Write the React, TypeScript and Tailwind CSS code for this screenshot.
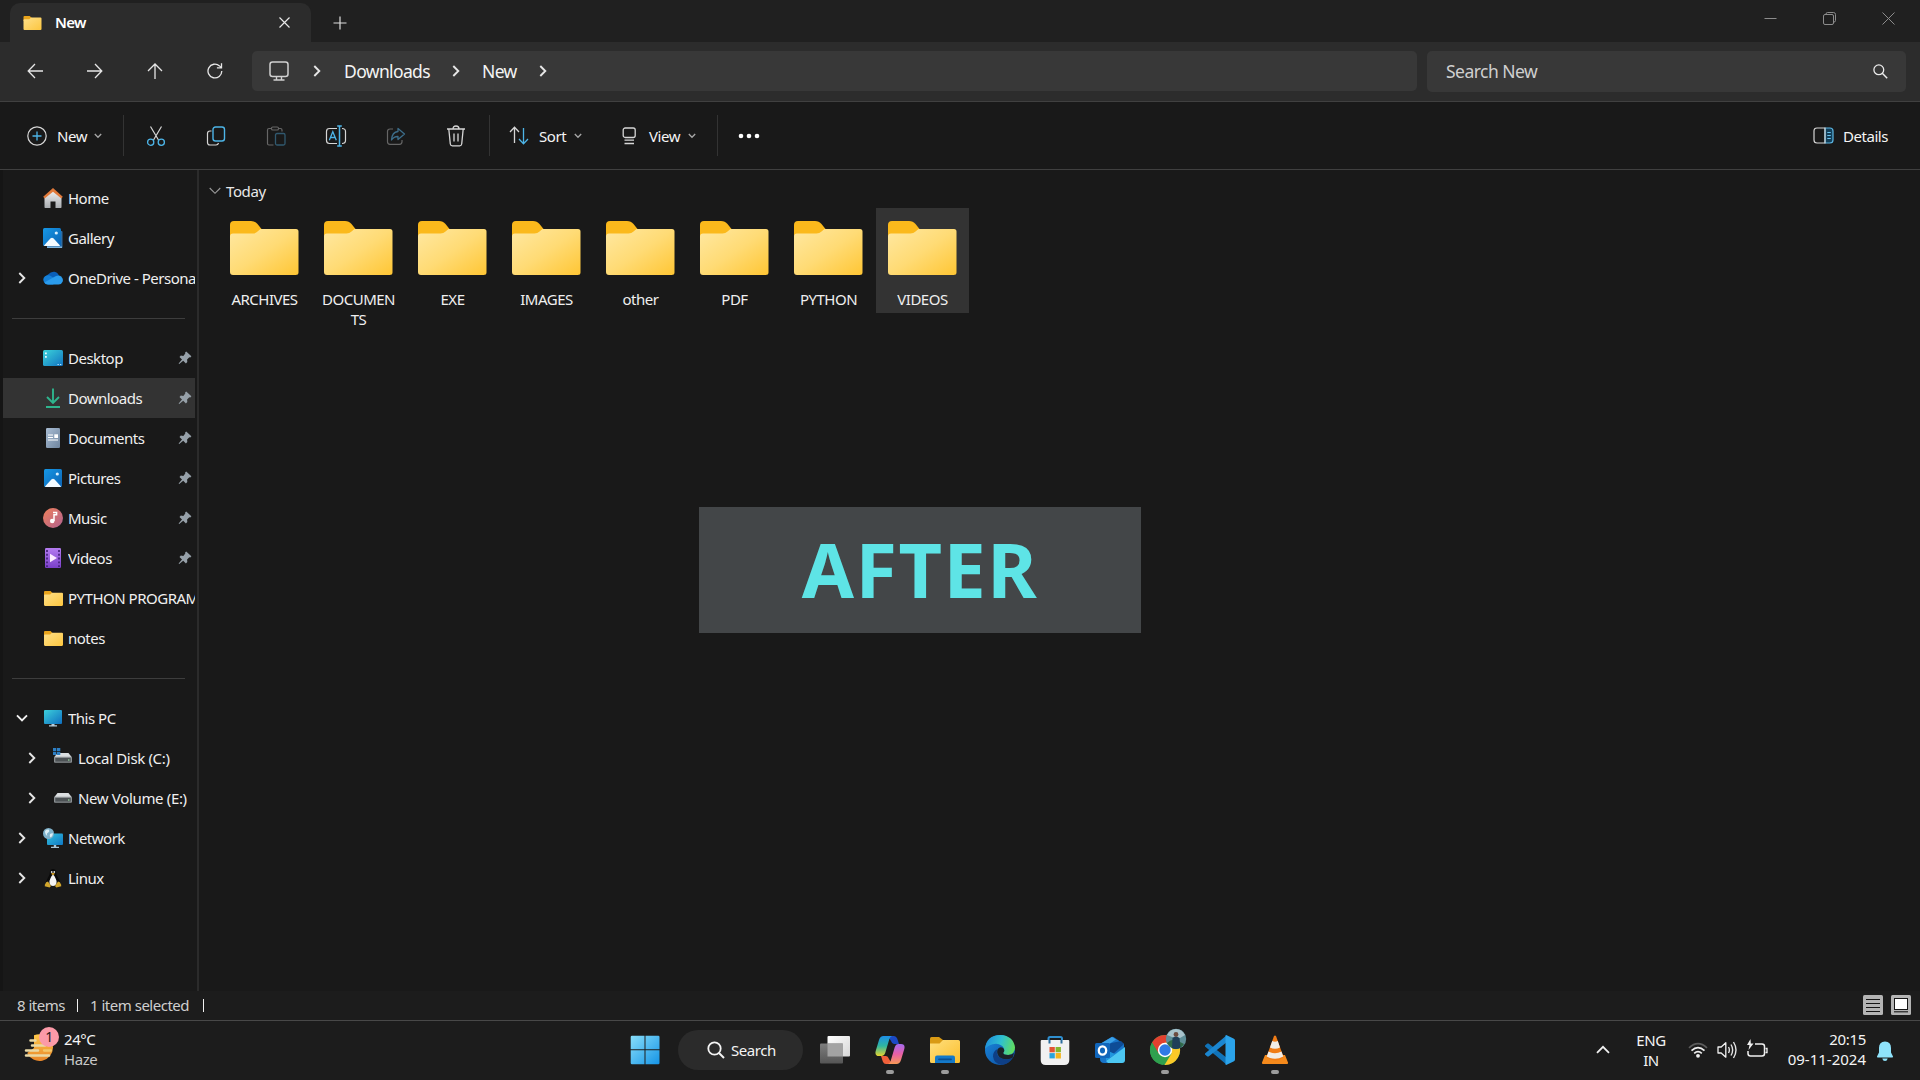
import type { ReactNode } from "react";

function Svg({ w, h, vb, className = "", children }: { w: number; h: number; vb?: string; className?: string; children: ReactNode }) {
  return (
    <svg width={w} height={h} viewBox={vb ?? `0 0 ${w} ${h}`} fill="none" className={`block shrink-0 ${className}`}>
      {children}
    </svg>
  );
}

/* ---------- small glyphs ---------- */

const ChevronRight = ({ className = "" }: { className?: string }) => (
  <Svg w={8} h={12} className={className}>
    <path d="M1.3 1 6.3 6l-5 5" stroke="#e6e6e6" strokeWidth="1.9" />
  </Svg>
);

const ChevronDownBold = () => (
  <Svg w={12} h={8}>
    <path d="M1 1.3 6 6.3l5-5" stroke="#f2f2f2" strokeWidth="1.9" />
  </Svg>
);

const ChevronSmall = ({ className = "" }: { className?: string }) => (
  <Svg w={8} h={6} className={className}>
    <path d="M.8 1 4 4.3 7.2 1" stroke="#a8a8a8" strokeWidth="1.3" />
  </Svg>
);

const Pin = () => (
  <Svg w={14} h={14}>
    <path d="M8.2.5 13.4 5.3 12.3 6.5l-1-.2-2.2 2.3.2 2.4-1.4 1.4-2.7-2.6L1.2 13 .6 12.5l3.400-4L1.500 5.900l1.300-1.300 2.500.3 2-2.300-.2-1Z" fill="#96a0a8" />
  </Svg>
);

/* ---------- folder ---------- */

const Folder = ({ w, h }: { w: number; h: number }) => (
  <Svg w={w} h={h} vb="0 0 69 54">
    <defs>
      <linearGradient id="folderFront" x1="0" y1="0" x2="1" y2="1">
        <stop offset="0" stopColor="#ffe8a1" />
        <stop offset=".5" stopColor="#ffdb75" />
        <stop offset="1" stopColor="#ffc634" />
      </linearGradient>
    </defs>
    <path d="M0 4q0-4 4-4h17q4 0 6.500 3l4 5v12H0Z" fill="#fbb91c" />
    <path d="M0 15.500q0-3 3-3h19.500q3 0 5-2L30.500 8H66q2.500 0 2.500 2.500v41Q68.500 54 65.500 54H3q-3 0-3-3Z" fill="url(#folderFront)" />
  </Svg>
);

const SmallFolder = ({ w = 19, h = 15 }: { w?: number; h?: number }) => (
  <Svg w={w} h={h} vb="0 0 18 14">
    <defs>
      <linearGradient id="sfFront" x1="0" y1="0" x2="1" y2="1">
        <stop offset="0" stopColor="#ffe08a" />
        <stop offset="1" stopColor="#fcc63f" />
      </linearGradient>
    </defs>
    <path d="M0 1q0-1 1-1h5.200L8 1.800V5H0Z" fill="#e9a41c" />
    <path d="M0 4q0-.7.8-.7h5L7.600 1.500H17q1 0 1 1V13q0 1-1 1H1q-1 0-1-1Z" fill="url(#sfFront)" />
  </Svg>
);

/* ---------- sidebar icons ---------- */

const HomeIcon = () => (
  <Svg w={20} h={20}>
    <defs>
      <linearGradient id="homeWall" x1="0" y1="0" x2="0" y2="1">
        <stop offset="0" stopColor="#f2f2f2" />
        <stop offset="1" stopColor="#a9adb1" />
      </linearGradient>
    </defs>
    <path d="M1.500 9 10 2l8.500 7v10.300q0 .7-.7.7H12.500v-6.500h-5V20H2.200q-.7 0-.7-.7Z" fill="url(#homeWall)" />
    <path d="M10 0 .2 8.700l1.400 1.900L10 3.700l8.400 6.900 1.400-1.900Z" fill="#e0793a" />
  </Svg>
);

const Photo = ({ gallery = false }: { gallery?: boolean }) => (
  <Svg w={20} h={20}>
    <defs>
      <linearGradient id="photoSky" x1="0" y1="0" x2="1" y2="1">
        <stop offset="0" stopColor="#1698e6" />
        <stop offset="1" stopColor="#0c63b4" />
      </linearGradient>
    </defs>
    {gallery && <path d="M4 3h14.500q1 0 1 1v15q0 1-1 1H5q-1 0-1-1Z" fill="#2c6da6" />}
    {gallery && <path d="M4 18.500h15V20H4Z" fill="#7fb4dc" />}
    <g transform={gallery ? "translate(0 0)" : "translate(1 1)"}>
      <rect width="18" height="18" rx="1.500" fill="url(#photoSky)" />
      <path d="m1 17.500 6.600-7.200q1.400-1.300 2.800 0L17 17.500q-.5.500-1 .5H2q-.6 0-1-.5Z" fill="#f3faff" />
      <circle cx="13.300" cy="5" r="1.600" fill="#d9f0ff" />
    </g>
  </Svg>
);

const OneDrive = () => (
  <Svg w={20} h={14}>
    <path d="M5 3.500Q8 .2 11.500.7q3.200.5 4.500 4l-6 4.800L1.500 9Q2 5 5 3.500Z" fill="#0a5fb8" />
    <path d="M1 11Q-.8 7.500 2 5.300q3.500-2.200 6.500.2L15 9.500 10 13.500H5Q2 13.500 1 11Z" fill="#1580d8" />
    <path d="M12.500 5.200q3.500-1.500 5.600.2 2.600 2.400 1.500 5.400-1 2.700-4 2.700H5q-2.500 0-3.700-1.900Z" fill="#2b9cec" />
  </Svg>
);

const DesktopIcon = () => (
  <Svg w={20} h={16}>
    <defs>
      <linearGradient id="desk" x1="0" y1="0" x2="1" y2="1">
        <stop offset="0" stopColor="#3cd3da" />
        <stop offset="1" stopColor="#1173c0" />
      </linearGradient>
    </defs>
    <rect width="20" height="16" rx="1.500" fill="url(#desk)" />
    <path d="M2 2.500h1.800v1.800H2zM2 6h1.800v1.800H2z" fill="#e6fbff" />
    <path d="M14.500 14h1.300v1h-1.300zM17 14h1.300v1H17z" fill="#bfe6ff" />
  </Svg>
);

const DownloadIcon = () => (
  <Svg w={20} h={20}>
    <path d="M10 .5v14M4 9l6 6 6-6M3 19h14" stroke="#2fb48d" strokeWidth="1.900" />
  </Svg>
);

const DocumentIcon = () => (
  <Svg w={20} h={20}>
    <defs>
      <linearGradient id="docBg" x1="0" y1="0" x2="1" y2="1">
        <stop offset="0" stopColor="#a9bdd4" />
        <stop offset="1" stopColor="#6f859e" />
      </linearGradient>
    </defs>
    <rect x="3" width="14" height="20" rx="1.200" fill="url(#docBg)" />
    <path d="M5 7h5M5 9.500h5M5 12h10" stroke="#fff" strokeWidth="1.200" />
    <rect x="11.300" y="6.300" width="3.700" height="3.700" fill="#fff" />
  </Svg>
);

const MusicIcon = () => (
  <Svg w={20} h={20}>
    <defs>
      <linearGradient id="mus" x1="0" y1="0" x2="1" y2="1">
        <stop offset="0" stopColor="#f0805a" />
        <stop offset="1" stopColor="#b0618f" />
      </linearGradient>
    </defs>
    <circle cx="10" cy="10" r="10" fill="url(#mus)" />
    <path d="M10 4.500h3.600v2.300H11V13" stroke="#fff" strokeWidth="1.500" />
    <circle cx="9.200" cy="13" r="2.300" fill="#fff" />
  </Svg>
);

const VideoIcon = () => (
  <Svg w={20} h={20}>
    <defs>
      <linearGradient id="vid" x1="0" y1="0" x2="0" y2="1">
        <stop offset="0" stopColor="#b47cf0" />
        <stop offset="1" stopColor="#7a3fc9" />
      </linearGradient>
    </defs>
    <rect x="2" width="16" height="20" rx="1.200" fill="url(#vid)" />
    <path d="M4 2v17M16 2v17" stroke="#43217a" strokeWidth="1.700" strokeDasharray="1.900 1.900" />
    <path d="m7 5.700 7 4.300-7 4.300Z" fill="#fbeaff" />
  </Svg>
);

const PcIcon = () => (
  <Svg w={20} h={18}>
    <defs>
      <linearGradient id="pcScreen" x1="0" y1="0" x2="1" y2="1">
        <stop offset="0" stopColor="#3ccfdb" />
        <stop offset="1" stopColor="#0f6fc0" />
      </linearGradient>
    </defs>
    <rect x="1" y="1" width="18" height="14" rx="1" fill="url(#pcScreen)" />
    <path d="M8.500 15h3v1.300H14v1.200H6v-1.200h2.500Z" fill="#b9cbd8" />
  </Svg>
);

const DriveIcon = ({ windows = false }: { windows?: boolean }) => (
  <Svg w={20} h={20}>
    <path d="M4.500 5h11L19 9.500H1Z" fill="#dcdfe1" />
    <rect x="1" y="8.800" width="18" height="6" rx="1" fill="#8b9093" />
    <rect x="2.300" y="10" width="15.400" height="3.600" fill="#4d5255" />
    <circle cx="15.800" cy="12" r=".8" fill="#9fe0a0" />
    {windows && <path d="M0-.2h3.300V3H0zM4-.2h3.300V3H4zM0 3.700h3.300v3.200H0zM4 3.700h3.300v3.200H4z" fill="#2d7fc4" />}
  </Svg>
);

const NetworkIcon = () => (
  <Svg w={20} h={20}>
    <defs>
      <linearGradient id="netScreen" x1="0" y1="0" x2="1" y2="1">
        <stop offset="0" stopColor="#35c3dd" />
        <stop offset="1" stopColor="#0f78c6" />
      </linearGradient>
    </defs>
    <rect x="4" y="5.500" width="16" height="11.500" rx="1" fill="url(#netScreen)" />
    <path d="M10.800 17h2.400v1.800H16V20H8v-1.200h2.800Z" fill="#a9c6d8" />
    <circle cx="5.500" cy="5.500" r="5.500" fill="#7fb2cb" />
    <path d="M2 3q2-2 4-1.300 1 2-1 3T4.500 8Q2 7 2 3ZM7 6q2-1 3-.5Q9.500 9 7.500 9.600 6.200 8 7 6Z" fill="#dceff6" />
  </Svg>
);

const LinuxIcon = () => (
  <Svg w={20} h={20}>
    <path d="M10 1q3.200 0 3.200 3.800 0 2.200 1.800 4.700 2 3 1.500 6L14 18H6l-2.500-2.500q-.5-3 1.500-6 1.800-2.500 1.800-4.700Q6.800 1 10 1Z" fill="#0a0a0a" />
    <path d="M10 6.500q1.800 1.300 2.600 4 1.500 2.600.9 5Q12.500 18 10 18t-3.500-2.500q-.6-2.400.9-5 .8-2.700 2.600-4Z" fill="#f4f4f4" />
    <circle cx="8.700" cy="4" r=".9" fill="#ddd" />
    <circle cx="11.300" cy="4" r=".9" fill="#ddd" />
    <path d="M8 5.700 10 4.800l2 .9-2 1.500Z" fill="#e0a825" />
    <path d="M3.200 14.200 5 13.500l3 4.500-1.300 1.600-5-1.300.4-2Z" fill="#d2a62c" />
    <path d="M16.800 14.200 15 13.500 12 18l1.300 1.600 5-1.300-.4-2Z" fill="#d2a62c" />
  </Svg>
);

/* ---------- sidebar ---------- */

type NavItem = { label: string; icon: ReactNode; pin?: boolean; active?: boolean; arrow?: "right" | "down"; nested?: boolean };

const groups: NavItem[][] = [
  [
    { label: "Home", icon: <HomeIcon /> },
    { label: "Gallery", icon: <Photo gallery /> },
    { label: "OneDrive - Persona", icon: <OneDrive />, arrow: "right" },
  ],
  [
    { label: "Desktop", icon: <DesktopIcon />, pin: true },
    { label: "Downloads", icon: <DownloadIcon />, pin: true, active: true },
    { label: "Documents", icon: <DocumentIcon />, pin: true },
    { label: "Pictures", icon: <Photo />, pin: true },
    { label: "Music", icon: <MusicIcon />, pin: true },
    { label: "Videos", icon: <VideoIcon />, pin: true },
    { label: "PYTHON PROGRAM", icon: <SmallFolder /> },
    { label: "notes", icon: <SmallFolder /> },
  ],
  [
    { label: "This PC", icon: <PcIcon />, arrow: "down" },
    { label: "Local Disk (C:)", icon: <DriveIcon windows />, arrow: "right", nested: true },
    { label: "New Volume (E:)", icon: <DriveIcon />, arrow: "right", nested: true },
    { label: "Network", icon: <NetworkIcon />, arrow: "right" },
    { label: "Linux", icon: <LinuxIcon />, arrow: "right" },
  ],
];

function SidebarRow({ item }: { item: NavItem }) {
  return (
    <div className={`flex h-10 items-center overflow-hidden ${item.active ? "bg-[#333333]" : ""} ${item.nested ? "pl-[22px]" : "pl-3"}`}>
      <div className="flex w-[14px] shrink-0 justify-center">
        {item.arrow === "right" && <ChevronRight />}
        {item.arrow === "down" && <ChevronDownBold />}
      </div>
      <div className="ml-[14px] flex w-5 shrink-0 justify-center">{item.icon}</div>
      <span className={`ml-[5px] min-w-0 grow overflow-hidden whitespace-nowrap text-[15px] leading-10 text-[#f0f0f0] ${item.nested ? "tracking-[-0.023em]" : "tracking-[-0.033em]"}`}>{item.label}</span>
      {item.pin && <div className="mr-[3px] shrink-0"><Pin /></div>}
    </div>
  );
}

/* ---------- top bars ---------- */

const ToolSep = () => <div className="h-[41px] w-px shrink-0 bg-[#333333]" />;

function TitleBar() {
  return (
    <header className="flex h-[42px] shrink-0 items-end bg-[#202020]">
      <div className="ml-[10px] flex h-[39px] w-[301px] items-center rounded-t-[10px] bg-[#2c2c2c] pl-[13px] pr-[21px]">
        <SmallFolder w={19} h={14} />
        <span className="ml-[13px] grow text-[15px] font-semibold leading-[39px] tracking-[-0.045em] text-white">New</span>
        <Svg w={11} h={11} className="mb-px">
          <path d="m.5.5 10 10M10.500.5l-10 10" stroke="#e8e8e8" strokeWidth="1.200" />
        </Svg>
      </div>
      <div className="flex h-[38px] grow items-center pl-[22px]">
        <Svg w={14} h={14}>
          <path d="M7 .5v13M.5 7h13" stroke="#dedede" strokeWidth="1.200" />
        </Svg>
      </div>
      <div className="mb-[17px] mr-[25px] flex items-center gap-[46px]">
        <Svg w={13} h={13}><path d="M.5 6.500h12" stroke="#8c8c8c" /></Svg>
        <Svg w={13} h={13}>
          <path d="M3 2.500V2Q3 .5 4.500.5h6q2 0 2 2v6q0 1.500-1.500 1.500" stroke="#8c8c8c" />
          <rect x=".5" y="2.500" width="10" height="10" rx="1.500" stroke="#8c8c8c" />
        </Svg>
        <Svg w={13} h={13}><path d="m.5.5 12 12M12.500.5l-12 12" stroke="#8c8c8c" /></Svg>
      </div>
    </header>
  );
}

function NavBar() {
  return (
    <div className="flex h-[60px] shrink-0 items-start border-b border-[#404040] bg-[#2c2c2c] pt-[9px]">
      <div className="flex h-10 w-[252px] items-center gap-11 pl-[27px] text-[#e6e6e6]">
        <Svg w={16} h={16}><path d="M8 1 1.200 8 8 15M1.500 8H16" stroke="currentColor" strokeWidth="1.300" /></Svg>
        <Svg w={16} h={16}><path d="m8 1 6.800 7L8 15M14.500 8H0" stroke="currentColor" strokeWidth="1.300" /></Svg>
        <Svg w={16} h={16}><path d="M1 8 8 1l7 7M8 1.300V16" stroke="currentColor" strokeWidth="1.300" /></Svg>
        <Svg w={16} h={16}><path d="M14.800 8A6.900 6.900 0 1 1 12.500 2.900L14.300 4.600M14.500.3v4.600h-4.600" stroke="currentColor" strokeWidth="1.300" /></Svg>
      </div>
      <div className="flex h-10 w-[1165px] items-center rounded-[5px] bg-[#383838] pl-[17px] text-[17.5px] leading-10 tracking-[-0.036em] text-[#f4f4f4]">
        <Svg w={20} h={20}>
          <rect x="1" y="1" width="18" height="14.500" rx="2.500" stroke="#d0d0d0" strokeWidth="1.500" />
          <path d="M7.500 16v2.500M12.500 16v2.500M4.500 19h11" stroke="#d0d0d0" strokeWidth="1.400" />
        </Svg>
        <ChevronRight className="ml-6" />
        <span className="ml-[23px] w-[108px]">Downloads</span>
        <ChevronRight />
        <span className="ml-[22px] w-[57px]">New</span>
        <ChevronRight />
      </div>
      <div className="ml-[10px] flex h-[41px] w-[479px] items-center rounded-[5px] bg-[#383838] pl-[19px] pr-[18px]">
        <span className="grow text-[17.5px] leading-[41px] tracking-[-0.03em] text-[#cfcfcf]">Search New</span>
        <Svg w={15} h={15}>
          <circle cx="5.800" cy="5.800" r="4.900" stroke="#ececec" strokeWidth="1.300" />
          <path d="m9.300 9.300 4.900 4.900" stroke="#ececec" strokeWidth="1.500" />
        </Svg>
      </div>
    </div>
  );
}

function Toolbar() {
  const B = "#4db5e8";
  return (
    <div className="flex h-[68px] shrink-0 items-center border-b border-[#404040] bg-[#191919] text-[15px] leading-5 tracking-[-0.03em] text-[#f4f4f4]">
      <Svg w={20} h={20} className="ml-[27px]">
        <circle cx="10" cy="10" r="9.200" stroke="#d6d6d6" strokeWidth="1.200" />
        <path d="M10 5.500v9M5.500 10h9" stroke={B} strokeWidth="1.300" />
      </Svg>
      <span className="ml-[10px] w-[37px]">New</span>
      <ChevronSmall />
      <div className="ml-[21px]"><ToolSep /></div>

      <Svg w={20} h={20} className="ml-[22px]">
        <path d="M4.500.5 12.500 14M15.500.5 7.500 14" stroke="#d6d6d6" strokeWidth="1.200" />
        <circle cx="4.700" cy="16.200" r="3.100" stroke={B} strokeWidth="1.300" />
        <circle cx="15.300" cy="16.200" r="3.100" stroke={B} strokeWidth="1.300" />
      </Svg>
      <Svg w={20} h={20} className="ml-10">
        <path d="M5.500 5H4Q1.500 5 1.500 7.500v9q0 2.500 2.500 2.500h6q2 0 2.500-2" stroke="#d6d6d6" strokeWidth="1.200" />
        <rect x="7" y="1" width="11.500" height="14" rx="2.500" stroke={B} strokeWidth="1.400" />
      </Svg>
      <Svg w={20} h={20} className="ml-10">
        <path d="M6 2.500H3Q1.500 2.500 1.500 4v13.500q0 1.500 1.500 1.500h4.500M12 2.500h2.500Q16 2.500 16 4v1.500" stroke="#666" strokeWidth="1.200" />
        <rect x="5.500" y="1" width="7" height="3" rx="1.300" stroke="#666" strokeWidth="1.100" />
        <rect x="9.500" y="7.500" width="9.500" height="11.500" rx="1.500" stroke="#31596f" strokeWidth="1.300" />
      </Svg>
      <Svg w={22} h={22} className="ml-[39px]">
        <path d="M12 3.500H4.500q-3 0-3 3v9q0 3 3 3H12M17 3.500q3.500 0 3.500 3v9q0 3-3.500 3" stroke="#d6d6d6" strokeWidth="1.200" />
        <path d="M12.200 1h4.600M12.200 21h4.600M14.500 1v20" stroke={B} strokeWidth="1.500" />
        <path d="M4.300 15.300 7.800 6.700l3.500 8.600M5.500 12.500h4.600" stroke={B} strokeWidth="1.300" />
      </Svg>
      <Svg w={20} h={20} className="ml-[39px]">
        <path d="M7 3H4Q1.500 3 1.500 5.500v10.300q0 2.500 2.500 2.500h9.500q2.500 0 2.500-2.500V14" stroke="#666" strokeWidth="1.200" />
        <path d="M12 2.500 18.500 8 12 13.500v-3q-4-.2-6.500 3.500Q6 6 12 5.500Z" stroke="#3c6d8a" strokeWidth="1.300" strokeLinejoin="round" />
      </Svg>
      <Svg w={20} h={22} className="ml-10">
        <path d="M1 4h18M7 4q0-3 3-3t3 3M2.800 4l1.500 15q.3 1.800 2 1.800h7.400q1.700 0 2-1.800L17.200 4M8 8.500v8M12 8.500v8" stroke="#d6d6d6" strokeWidth="1.300" />
      </Svg>
      <div className="ml-[23px]"><ToolSep /></div>

      <Svg w={20} h={19} className="ml-[19px]">
        <path d="M5.500 17V1.500M1 6l4.500-4.700L10 6" stroke="#d6d6d6" strokeWidth="1.300" />
        <path d="M14.500 2v15.500M10 13l4.500 4.700L19 13" stroke={B} strokeWidth="1.300" />
      </Svg>
      <span className="ml-[10px] w-[35px]">Sort</span>
      <ChevronSmall />
      <Svg w={15} h={18} className="ml-10">
        <rect x="1.200" y="1" width="12" height="9.500" rx="2" stroke="#d6d6d6" strokeWidth="1.300" />
        <path d="M2.500 13.200h9.500M2.500 16.500h9.500" stroke="#d6d6d6" strokeWidth="1.300" />
      </Svg>
      <span className="ml-3 w-[39px]">View</span>
      <ChevronSmall />
      <div className="ml-[21px]"><ToolSep /></div>
      <Svg w={22} h={6} className="ml-[20px]">
        <circle cx="3" cy="3" r="2.300" fill="#fff" />
        <circle cx="11" cy="3" r="2.300" fill="#fff" />
        <circle cx="19" cy="3" r="2.300" fill="#fff" />
      </Svg>

      <div className="ml-auto mr-[31px] flex items-center">
        <Svg w={21} h={17}>
          <path d="M12 1h5q3 0 3 3v9q0 3-3 3h-5Z" fill="#123f59" stroke="#5cb6e3" strokeWidth="1.200" />
          <path d="M12 1H4Q1 1 1 4v9q0 3 3 3h8Z" stroke="#d6d6d6" strokeWidth="1.200" />
          <path d="M14.300 5.500h3.500M14.300 8.500h3.500M14.300 11.500h3.500" stroke="#6cc3ee" strokeWidth="1.100" />
        </Svg>
        <span className="ml-[9px] w-[46px]">Details</span>
      </div>
    </div>
  );
}

/* ---------- content ---------- */

const folders = ["ARCHIVES", "DOCUMENTS", "EXE", "IMAGES", "other", "PDF", "PYTHON", "VIDEOS"];

function Content() {
  return (
    <main className="relative grow">
      <div className="flex h-[38px] items-center pl-[10px] pt-[3px]">
        <Svg w={12} h={8} className="mt-px"><path d="m.7 1 5.300 5.300L11.300 1" stroke="#9a9a9a" strokeWidth="1.100" /></Svg>
        <span className="ml-[5px] text-[15px] leading-5 tracking-[-0.025em] text-[#e8e8e8]">Today</span>
      </div>
      <div className="flex gap-px pl-[19px]">
        {folders.map((name) => (
          <div key={name} className={`flex h-[105px] w-[93px] flex-col items-center pt-[13px] ${name === "VIDEOS" ? "bg-[#333333]" : ""}`}>
            <Folder w={69} h={54} />
            <div className="mt-[14px] w-[78px] break-all text-center text-[15px] leading-5 tracking-[-0.033em] text-[#efefef]">{name}</div>
          </div>
        ))}
      </div>
      <div className="absolute left-[500px] top-[337px] flex h-[126px] w-[442px] items-center justify-center bg-[#434648] pb-[2px] text-[75.5px] font-bold leading-none tracking-[1.5px] text-[#5ee4e6]">
        AFTER
      </div>
    </main>
  );
}

function StatusBar() {
  return (
    <footer className="flex h-[30px] shrink-0 items-center border-b border-[#484848] bg-[#1c1c1c] pl-[17px] pr-[9px] text-[15px] leading-5 tracking-[-0.033em] text-[#cfcfcf]">
      <span className="w-[60px] pb-[2px]">8 items</span>
      <div className="h-[13px] w-px bg-[#f0f0f0]" />
      <span className="ml-[12px] w-[113px] pb-[2px]">1 item selected</span>
      <div className="h-[13px] w-px bg-[#f0f0f0]" />
      <div className="ml-auto flex gap-2 pb-px">
        <Svg w={20} h={20}>
          <rect width="20" height="20" rx="1.500" fill="#b4b4b4" />
          <path d="M3 4.500h14M3 8.500h14M3 12.500h14M3 16.500h14" stroke="#161616" strokeWidth="1.100" />
        </Svg>
        <Svg w={20} h={20}>
          <rect width="20" height="20" rx="1.500" fill="#b4b4b4" />
          <rect x="3.500" y="3.500" width="13" height="11" fill="#fff" stroke="#161616" />
          <path d="M3 16.800h14" stroke="#161616" strokeWidth="1.100" />
        </Svg>
      </div>
    </footer>
  );
}

/* ---------- taskbar ---------- */

const WeatherIcon = () => (
  <Svg w={36} h={38}>
    <defs>
      <linearGradient id="sun" x1="0" y1="0" x2="0" y2="1">
        <stop offset="0" stopColor="#ffc94a" />
        <stop offset="1" stopColor="#e8862a" />
      </linearGradient>
    </defs>
    <path d="M10 9.300A13.500 13.500 0 0 1 29 21.500a13.500 13.500 0 0 1-25.800 5.500L10 22Z" fill="url(#sun)" />
    <path d="M6.500 14.500h5M8 19.500h13M2 24.500h12M2 29.500h23" stroke="#e9d9a6" strokeWidth="2.500" strokeLinecap="round" />
    <path d="M20 24.500h7" stroke="#f3c76a" strokeWidth="2.300" strokeLinecap="round" />
    <circle cx="25" cy="11" r="10" fill="#fb9aa8" />
    <text x="25" y="16.200" textAnchor="middle" fontSize="14" fill="#2a1a1c" fontFamily="Noto Sans, sans-serif">1</text>
  </Svg>
);

const StartIcon = () => (
  <Svg w={30} h={30}>
    <defs>
      <linearGradient id="win" gradientUnits="userSpaceOnUse" x1="0" y1="0" x2="29" y2="29">
        <stop offset="0" stopColor="#8be0fb" />
        <stop offset="1" stopColor="#1795e6" />
      </linearGradient>
    </defs>
    <path d="M2 .8h12.500v13.500H.7V2Q.7.8 2 .8ZM15.500.8h12.800q1.200 0 1.200 1.200v12.300h-14ZM.7 15.300h13.800v13.900H2q-1.300 0-1.300-1.200ZM15.500 15.300h14V28q0 1.200-1.200 1.200H15.500Z" fill="url(#win)" />
  </Svg>
);

const TaskViewIcon = () => (
  <Svg w={30} h={30}>
    <defs>
      <linearGradient id="tvA" x1="0" y1="0" x2="1" y2="1">
        <stop offset="0" stopColor="#fff" />
        <stop offset="1" stopColor="#d6d6d6" />
      </linearGradient>
      <linearGradient id="tvB" x1="0" y1="0" x2="0" y2="1">
        <stop offset="0" stopColor="#7e7e7e" />
        <stop offset="1" stopColor="#555" />
      </linearGradient>
    </defs>
    <rect x="7.500" y="1" width="22.500" height="20.500" rx="1" fill="url(#tvA)" />
    <rect y="8.500" width="23" height="20" rx="1" fill="url(#tvB)" />
    <path d="M7.500 8.500H23v13H7.500Z" fill="#a3a3a3" />
  </Svg>
);

const CopilotIcon = () => (
  <Svg w={30} h={30}>
    <defs>
      <linearGradient id="cpA" x1="0" y1="0" x2="0" y2="1">
        <stop offset="0" stopColor="#1d8fe8" />
        <stop offset=".5" stopColor="#2fb6a0" />
        <stop offset="1" stopColor="#e6d42e" />
      </linearGradient>
      <linearGradient id="cpB" x1="0" y1="0" x2="0" y2="1">
        <stop offset="0" stopColor="#a56bf0" />
        <stop offset=".5" stopColor="#e95fa6" />
        <stop offset="1" stopColor="#f79a56" />
      </linearGradient>
    </defs>
    <path d="M13 1h6q2.300 0 3.200 2.600L24 9h-5q-2 0-3-3Z" fill="#1b49c4" />
    <path d="M17 29h-6q-2.300 0-3.200-2.600L6 21h5q2 0 3 3Z" fill="#f0603a" />
    <path d="M8.500 1H17q-2 .5-2.800 3.500l-4 13.500Q9.300 21 7 21H4Q-.5 21 .7 16L4 5Q5.200 1 8.500 1Z" fill="url(#cpA)" />
    <path d="M21.500 29H13q2-.5 2.800-3.500l4-13.500Q20.700 9 23 9h3q4.500 0 3.300 5L26 25q-1.200 4-4.500 4Z" fill="url(#cpB)" />
  </Svg>
);

const ExplorerIcon = () => (
  <Svg w={30} h={30}>
    <defs>
      <linearGradient id="exF" x1="0" y1="0" x2="1" y2="1">
        <stop offset="0" stopColor="#ffdf7e" />
        <stop offset="1" stopColor="#fbbf2d" />
      </linearGradient>
    </defs>
    <path d="M0 3.500Q0 2 1.500 2H9l4 3v4H0Z" fill="#d99a14" />
    <path d="M0 8.500h9.500L13 5h15.500Q30 5 30 6.500v20q0 1.500-1.500 1.500h-27Q0 28 0 26.500Z" fill="url(#exF)" />
    <path d="M5 28v-5.500q0-2 2-2h16q2 0 2 2V28Z" fill="#1479c9" />
    <path d="M9 24.300h12" stroke="#0b4f91" strokeWidth="1.800" strokeLinecap="round" />
  </Svg>
);

const EdgeIcon = () => (
  <Svg w={30} h={30}>
    <defs>
      <linearGradient id="edTop" x1="0" y1=".4" x2="1" y2=".6">
        <stop offset="0" stopColor="#1f8fdc" />
        <stop offset=".5" stopColor="#2fc0cf" />
        <stop offset="1" stopColor="#63de5a" />
      </linearGradient>
      <linearGradient id="edLow" x1="0" y1="0" x2="1" y2="1">
        <stop offset="0" stopColor="#1b8be0" />
        <stop offset="1" stopColor="#0b4a9c" />
      </linearGradient>
    </defs>
    <circle cx="15" cy="15" r="15" fill="url(#edLow)" />
    <path d="M0 14Q1.300 0 15.500 0 28.500.8 30 12.500q0 6.500-7 7.500-5 0-5-2.200 1.800-1.500 1-4.300Q17 9.200 11 8.800 4 9 0 14Z" fill="url(#edTop)" />
    <path d="M12.500 14q-2 4 1.500 8 4.500 4 13 1.500-3.500 5.500-10 6.500Q9 29 8 21.500 8 16 12.500 14Z" fill="#0e3f86" />
    <path d="M12.800 14q1.800-2.500 5-1.300 2.800 2.300.5 5.100 0 2.200 5 2.300 3.600-.1 5.700-2l-1.500 4.900q-8 3-13-.8-3.700-4-1.700-8.200Z" fill="#1c2128" />
  </Svg>
);

const StoreIcon = () => (
  <Svg w={30} h={30}>
    <path d="M8.500 8V3.500Q8.500 2 10 2h10.500Q22 2 22 3.500V8" stroke="#2f8fcf" strokeWidth="2" />
    <path d="M.7 6q0-1 1-1h26.600q1 0 1 1v19q0 5-5 5H5.700q-5 0-5-5Z" fill="#f1f1f1" />
    <path d="M8.500 5h2v3.500h-2zM20.500 5h2v3.500h-2Z" fill="#2b6e9e" />
    <path d="M9.500 12h5.300v5.300H9.500Z" fill="#e25332" />
    <path d="M15.600 12h5.300v5.300h-5.300Z" fill="#84b52c" />
    <path d="M9.500 18.100h5.300v5.300H9.500Z" fill="#29a3dc" />
    <path d="M15.600 18.100h5.300v5.300h-5.300Z" fill="#f4b51f" />
  </Svg>
);

const OutlookIcon = () => (
  <Svg w={30} h={30}>
    <path d="M5 9 16.500 2q1-.6 2 0L29 9v16q0 3-3 3H9q-4 0-4-4Z" fill="#1874c8" />
    <path d="M12 9 26 6l3 3-13 12-8-4Z" fill="#0e4c96" />
    <path d="m5 9 12-7 4 2.500L8 13Z" fill="#3ba1e8" />
    <path d="M30 12v13q0 3-3 3H13l-2-2Z" fill="#4cc7f2" />
    <path d="M30 12 11 26V15l9 4Z" fill="#2096de" />
    <rect y="8" width="15" height="15" rx="1.500" fill="#1166bb" />
    <ellipse cx="7.500" cy="15.500" rx="3.700" ry="4.200" stroke="#fff" strokeWidth="2.300" />
  </Svg>
);

const ChromeIcon = () => (
  <Svg w={30} h={30} className="overflow-visible">
    <circle cx="15" cy="15" r="15" fill="#2fa04e" />
    <path d="M15 15 2 7.500A15 15 0 0 1 28 7.500L22 12Z" fill="#e2412f" />
    <path d="M15 7.500h13A15 15 0 0 1 14.500 30l7-11.500Z" fill="#fbc928" />
    <path d="M2 7.500 9 19l6-4V7.500Z" fill="#e2412f" />
    <path d="M2 7.500 8.500 18.700 15 22l-2 8A15 15 0 0 1 2 7.500Z" fill="#2fa04e" />
    <circle cx="15" cy="15" r="7.200" fill="#fff" />
    <circle cx="15" cy="15" r="5.700" fill="#2f7ae5" />
    <circle cx="26" cy="4" r="10.200" fill="#5f8f99" />
    <path d="M17 0Q20-6 26-6t9 6l-5 3-8-1Z" fill="#a9c3cc" />
    <path d="M17 8q4-4 9-3l8 4q-3 5-8 5T17 8Z" fill="#2f6a49" />
    <path d="M22.500 3q3.500-3 7 0l1 9.500q-4 2.500-8.500.5Z" fill="#1f3e58" />
    <circle cx="26" cy="-.5" r="2.400" fill="#6d4c41" />
  </Svg>
);

const VsCodeIcon = () => (
  <Svg w={30} h={30}>
    <path d="M0 10.500 2.300 8.600q.6-.4 1.300 0L22 23v7L.3 11.800q-.8-.6-.3-1.300Z" fill="#1173b8" />
    <path d="M0 19.500l2.300 1.900q.6.400 1.300 0L22 7V0L.3 18.200q-.8.600-.3 1.300Z" fill="#1b86d0" />
    <path d="M20.500.3q.5-.3 1.200 0l6.800 3.100Q30 4 30 5.600v18.800q0 1.600-1.500 2.200l-6.800 3.100q-.7.3-1.200 0Z" fill="#2ba3ea" />
  </Svg>
);

const VlcIcon = () => (
  <Svg w={30} h={30}>
    <path d="M5 20h20l3 7.500q.3 1.500-1 1.500H3q-1.300 0-1-1.500Z" fill="#f58a1c" />
    <path d="M14 1q1-1 2 0l7.500 21q-4 3.500-8.500 3.500T6.500 22Z" fill="#f07c16" />
    <path d="m12.200 6-2.200 6.500q5 2.500 10 0L17.800 6q-2.800 1.300-5.600 0ZM8.500 16.500l-1.800 5Q15 26 23.300 21.500l-1.800-5q-6.500 3.500-13 0Z" fill="#f1ece6" />
  </Svg>
);

const apps: { name: string; icon: ReactNode; running?: boolean }[] = [
  { name: "Task View", icon: <TaskViewIcon /> },
  { name: "Copilot", icon: <CopilotIcon />, running: true },
  { name: "File Explorer", icon: <ExplorerIcon />, running: true },
  { name: "Edge", icon: <EdgeIcon /> },
  { name: "Store", icon: <StoreIcon /> },
  { name: "Outlook", icon: <OutlookIcon /> },
  { name: "Chrome", icon: <ChromeIcon />, running: true },
  { name: "VS Code", icon: <VsCodeIcon /> },
  { name: "VLC", icon: <VlcIcon />, running: true },
];

function Taskbar() {
  return (
    <div className="flex h-[59px] shrink-0 items-start bg-[#1c1c1c] text-[15px] leading-5 tracking-[-0.03em] text-[#f4f4f4]">
      <div className="flex w-[630px] pl-6 pt-[5px]">
        <WeatherIcon />
        <div className="ml-1 pt-[3px]">
          <div>24°C</div>
          <div className="text-[#c8c8c8]">Haze</div>
        </div>
      </div>
      <div className="pt-[14px]"><StartIcon /></div>
      <div className="ml-[18px] mt-[9px] flex h-10 w-[125px] items-center rounded-full bg-[#2b2b2b] pl-[29px]">
        <Svg w={18} h={18}>
          <circle cx="7.500" cy="7.500" r="6.200" stroke="#f4f4f4" strokeWidth="1.800" />
          <path d="m12 12 5 5" stroke="#f4f4f4" strokeWidth="2" />
        </Svg>
        <span className="ml-[6px]">Search</span>
      </div>
      <div className="ml-[17px] flex gap-[25px] pt-[14px]">
        {apps.map((app) => (
          <div key={app.name} title={app.name} className="flex w-[30px] flex-col items-center">
            {app.icon}
            {app.running && <div className="mt-[5px] h-1 w-2 rounded-full bg-[#9c9c9c]" />}
          </div>
        ))}
      </div>

      <div className="ml-auto flex h-[59px] items-start pr-[26px]">
        <Svg w={14} h={9} className="mt-6"><path d="m1 7.800 6-6 6 6" stroke="#f0f0f0" strokeWidth="1.800" /></Svg>
        <div className="ml-[26px] w-[30px] pt-[9px] text-center">
          <div>ENG</div>
          <div>IN</div>
        </div>
        <Svg w={20} h={16} className="ml-[22px] mt-[21px]">
          <path d="M1 5.800q9-8.300 18 0" stroke="#5c5c5c" strokeWidth="1.700" />
          <path d="M3.500 8.600q6.500-6 13 0M6.200 11.400q3.800-3.400 7.600 0" stroke="#f0f0f0" strokeWidth="1.700" />
          <circle cx="10" cy="13.800" r="1.900" fill="#f0f0f0" />
        </Svg>
        <Svg w={21} h={18} className="ml-[9px] mt-5">
          <path d="M1 6h3.200L8.800 1.800v14.400L4.200 12H1Z" stroke="#f0f0f0" strokeWidth="1.300" strokeLinejoin="round" />
          <path d="M11.500 6q1.800 3 0 6M14 3.500q3.300 5.500 0 11M16.500 1q5 8 0 16" stroke="#e4e4e4" strokeWidth="1.400" />
        </Svg>
        <Svg w={22} h={20} className="ml-[8px] mt-[18px]">
          <path d="M9 5h7q2.500 0 2.500 2.500v7q0 2.500-2.500 2.500H4.500Q2 17 2 14.500V12" stroke="#f0f0f0" strokeWidth="1.500" />
          <path d="M19.500 9.500h1.500v4h-1.500" stroke="#f0f0f0" strokeWidth="1.300" />
          <path d="M4.500 0 1 6h2.500L2.500 11 7.500 4.500H4.800Z" fill="#f0f0f0" />
        </Svg>
        <div className="ml-4 w-[82px] whitespace-nowrap pt-2 text-right tracking-normal">
          <div className="tracking-[-0.02em]">20:15</div>
          <div>09-11-2024</div>
        </div>
        <Svg w={18} h={20} className="ml-[10px] mt-5">
          <path d="M9 .5q6 .3 6 6.500v4.500l2 4q.2 1-.8 1H1.800q-1 0-.8-1l2-4V7Q3 .8 9 .5Z" fill="#8fe3fb" />
          <path d="M6.300 17.500h5.400Q11.200 20 9 20t-2.700-2.500Z" fill="#8fe3fb" />
        </Svg>
      </div>
    </div>
  );
}

export default function App() {
  return (
    <div className="flex h-[1080px] w-[1920px] flex-col overflow-hidden bg-[#191919] font-['Noto_Sans',sans-serif]">
      <TitleBar />
      <NavBar />
      <Toolbar />
      <div className="flex min-h-0 grow">
        <aside className="w-[199px] shrink-0 border-l-[3px] border-r-2 border-l-[#151515] border-r-[#2b2b2b] pr-[2px] pt-2">
          {groups.map((group, i) => (
            <div key={i}>
              {i > 0 && (
                <div className="flex h-10 items-center pl-[9px] pr-[10px]">
                  <div className="h-px w-full bg-[#3d3d3d]" />
                </div>
              )}
              {group.map((item) => (
                <SidebarRow key={item.label} item={item} />
              ))}
            </div>
          ))}
        </aside>
        <Content />
      </div>
      <StatusBar />
      <Taskbar />
    </div>
  );
}
